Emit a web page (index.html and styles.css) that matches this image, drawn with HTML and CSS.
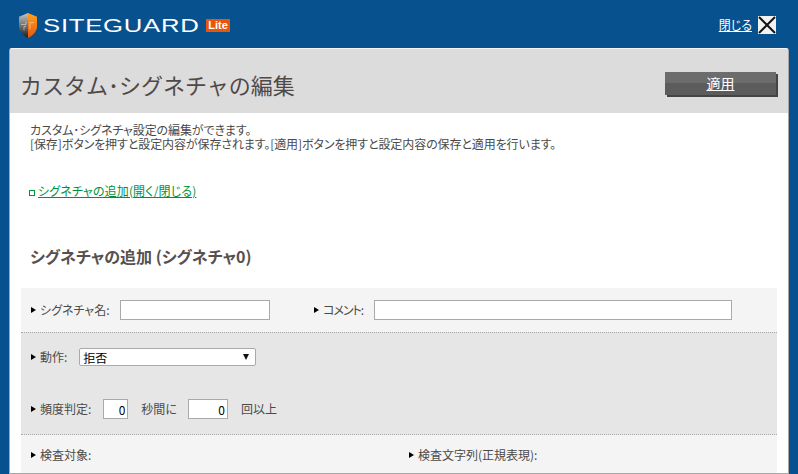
FILE: index.html
```html
<!DOCTYPE html>
<html lang="ja">
<head>
<meta charset="utf-8">
<title>カスタム・シグネチャの編集</title>
<link rel="stylesheet" href="styles.css">
</head>
<body>
<header class="topbar">
  <div class="brand">
    <svg class="shield" width="18" height="25" viewBox="0 0 18 26" preserveAspectRatio="none">
      <defs>
        <linearGradient id="sl" x1="0" y1="0" x2="0" y2="1"><stop offset="0" stop-color="#c4c4c4"/><stop offset="0.55" stop-color="#6a6a6a"/><stop offset="1" stop-color="#1c1c1c"/></linearGradient>
        <linearGradient id="sr" x1="0" y1="0" x2="0" y2="1"><stop offset="0" stop-color="#ffa21f"/><stop offset="1" stop-color="#e8560c"/></linearGradient>
      </defs>
      <path d="M9 0 L9 26 C4 23 1 20 0 15 L0 4 Z" fill="url(#sl)"/>
      <path d="M9 0 L18 4 L18 15 C17 20 14 23 9 26 Z" fill="url(#sr)"/>
      <path d="M2 12 H7 V9 M7 14 H5 V18 M11 17 V10 H15" fill="none" stroke="#e8e8e8" stroke-opacity=".55" stroke-width="1"/>
    </svg>
    <div class="wordmark"><span class="wordmark-text">SITEGUARD</span></div>
    <span class="lite">Lite</span>
  </div>
  <div class="close">
    <a href="#" class="close-link">閉じる</a>
    <svg class="close-x" width="18" height="18" viewBox="0 0 18 18">
      <rect width="18" height="18" fill="#f2f2f2"/>
      <path d="M1 1 L17 17 M17 1 L1 17" stroke="#141414" stroke-width="2"/>
    </svg>
  </div>
</header>
<main class="panel">
  <div class="titlebar">
    <h1 class="title">カスタム･シグネチャの編集</h1>
    <a href="#" class="apply">適用</a>
  </div>
  <div class="content">
    <p class="intro">カスタム･シグネチャ設定の編集ができます。<br>[保存]ボタンを押すと設定内容が保存されます。[適用]ボタンを押すと設定内容の保存と適用を行います。</p>
    <p class="toggle"><span class="toggle-mark"></span><a href="#">シグネチャの追加(開く/閉じる)</a></p>
    <h2 class="subtitle">シグネチャの追加 (シグネチャ0)</h2>
    <div class="row row-light row-top">
      <div class="field field-name">
        <span class="label">シグネチャ名:</span>
        <input class="text input-name" type="text">
      </div>
      <div class="field field-comment">
        <span class="label label-comment">コメント:</span>
        <input class="text input-comment" type="text">
      </div>
    </div>
    <div class="row row-dark">
      <div class="field">
        <span class="label">動作:</span>
        <div class="select"><span>拒否</span><i class="caret"></i></div>
      </div>
      <div class="field field-freq">
        <span class="label">頻度判定:</span>
        <input class="text num num-a" type="text" value="0">
        <span class="plain">秒間に</span>
        <input class="text num num-b" type="text" value="0">
        <span class="plain">回以上</span>
      </div>
    </div>
    <div class="row row-light row-bottom">
      <div class="field field-target"><span class="label">検査対象:</span></div>
      <div class="field"><span class="label">検査文字列(正規表現):</span></div>
    </div>
  </div>
</main>
</body>
</html>
```

FILE: styles.css
```css
* { box-sizing: border-box; }
html, body { height: 100%; }
body {
  margin: 0;
  background: #08518f;
  font-family: "Noto Sans CJK JP", "Liberation Sans", sans-serif;
  font-size: 12px;
  font-feature-settings: "palt";
  color: #4a4a4a;
  overflow: hidden;
}
.topbar {
  height: 48px;
  display: flex;
  justify-content: space-between;
  align-items: center;
  padding: 0 22px 0 19px;
}
.brand { display: flex; align-items: center; margin-top: 3px; }
.shield { display: block; margin-right: 6px; }
.wordmark {
  width: 159px;
  height: 20px;
  font-family: "Liberation Sans", sans-serif;
  font-size: 18px;
  line-height: 20px;
  color: #fff;
  white-space: nowrap;
}
.wordmark-text {
  display: inline-block;
  letter-spacing: 0.5px;
  transform: scaleX(1.43);
  transform-origin: left center;
}
.lite {
  margin-left: 4px;
  width: 24px;
  height: 13px;
  background: #e8560c;
  color: #fff;
  font: bold 11px/13px "Liberation Sans", sans-serif;
  text-align: center;
}
.close { display: flex; align-items: center; gap: 6px; margin-top: 2px; }
.close-link { color: #fff; font-size: 12px; line-height: 16px; }
.close-x { display: block; }
.panel {
  margin: 0 9px;
  height: 426px;
  background: #fff;
  border: 1px solid #a8a8a8;
  border-top: 1px solid #f4f4f4;
  border-radius: 3px 3px 0 0;
  overflow: hidden;
}
.titlebar {
  height: 64px;
  background: #dcdcdc;
  display: flex;
  justify-content: space-between;
  align-items: center;
  padding: 5px 10px 0 10px;
}
.title {
  margin: 0;
  font-size: 22px;
  line-height: 30px;
  font-weight: 400;
  font-feature-settings: normal;
  color: #4f4a48;
}
.apply {
  display: block;
  width: 111px;
  height: 23px;
  background: linear-gradient(#6c6c6c 0 50%, #5c5c5c 50%);
  box-shadow: 2px 2px 0 #444;
  color: #fff;
  font-size: 14px;
  line-height: 23px;
  text-align: center;
  margin-right: 2px;
}
.content { padding: 0 11px; }
.intro {
  margin: 0;
  padding: 10px 0 0 9px;
  font-size: 12px;
  line-height: 14px;
  letter-spacing: -0.1px;
  color: #4a4a4a;
}
.toggle {
  margin: 0;
  padding: 32px 0 0 8px;
  display: flex;
  align-items: center;
  font-size: 12px;
  line-height: 16px;
  letter-spacing: 0.15px;
}
.toggle a { color: #009238; }
.toggle-mark {
  width: 6px;
  height: 6px;
  margin-right: 3px;
  margin-top: 3px;
  border: 1px solid #009238;
  flex: none;
}
.subtitle {
  margin: 0;
  padding: 45px 0 0 9px;
  height: 89px;
  font-size: 16px;
  line-height: 24px;
  font-weight: 700;
  color: #57504e;
}
.row { padding: 0 10px; }
.row-light { background: #f4f4f4; }
.row-top { height: 44px; display: flex; align-items: center; }
.row-dark {
  height: 103px;
  display: flex;
  flex-direction: column;
  padding-top: 15px;
  gap: 33px;
  background: #e6e6e6;
  border-top: 1px dotted #a8a8a8;
  border-bottom: 1px dotted #a8a8a8;
}
.row-bottom { height: 40px; display: flex; align-items: center; }
.field { display: flex; align-items: center; }
.field-name { width: 283px; }
.field-target { width: 378px; }
.label {
  display: flex;
  align-items: center;
  font-size: 12px;
  line-height: 14px;
  color: #4a4a4a;
}
.label-comment { letter-spacing: -1px; }
.label::before {
  content: "";
  width: 5px;
  height: 6px;
  margin-right: 4px;
  background: #000;
  clip-path: polygon(0 0, 100% 50%, 0 100%);
}
.text {
  display: block;
  height: 20px;
  border: 1px solid #aaa;
  background: #fff;
  padding: 0 3px;
  margin: 0;
  outline: 0;
  border-radius: 0;
  font: 12px "Noto Sans CJK JP", sans-serif;
}
.input-name { width: 150px; margin-left: 11px; }
.input-comment { width: 358px; margin-left: 11px; }
.select {
  width: 177px;
  height: 18px;
  margin-left: 12px;
  background: #fff;
  border: 1px solid #aaa;
  border-radius: 2px;
  padding: 0 6px 0 3px;
  display: flex;
  justify-content: space-between;
  align-items: center;
  font-size: 12px;
  color: #000;
}
.caret {
  width: 0;
  height: 0;
  border-left: 3px solid transparent;
  border-right: 3px solid transparent;
  border-top: 6px solid #111;
}
.num { width: 25px; height: 20px; text-align: right; color: #000; padding: 0 2px; }
.num-a { margin-left: 12px; }
.num-b { width: 40px; margin-left: 11px; }
.plain { margin-left: 13px; font-size: 12px; line-height: 14px; }
```
